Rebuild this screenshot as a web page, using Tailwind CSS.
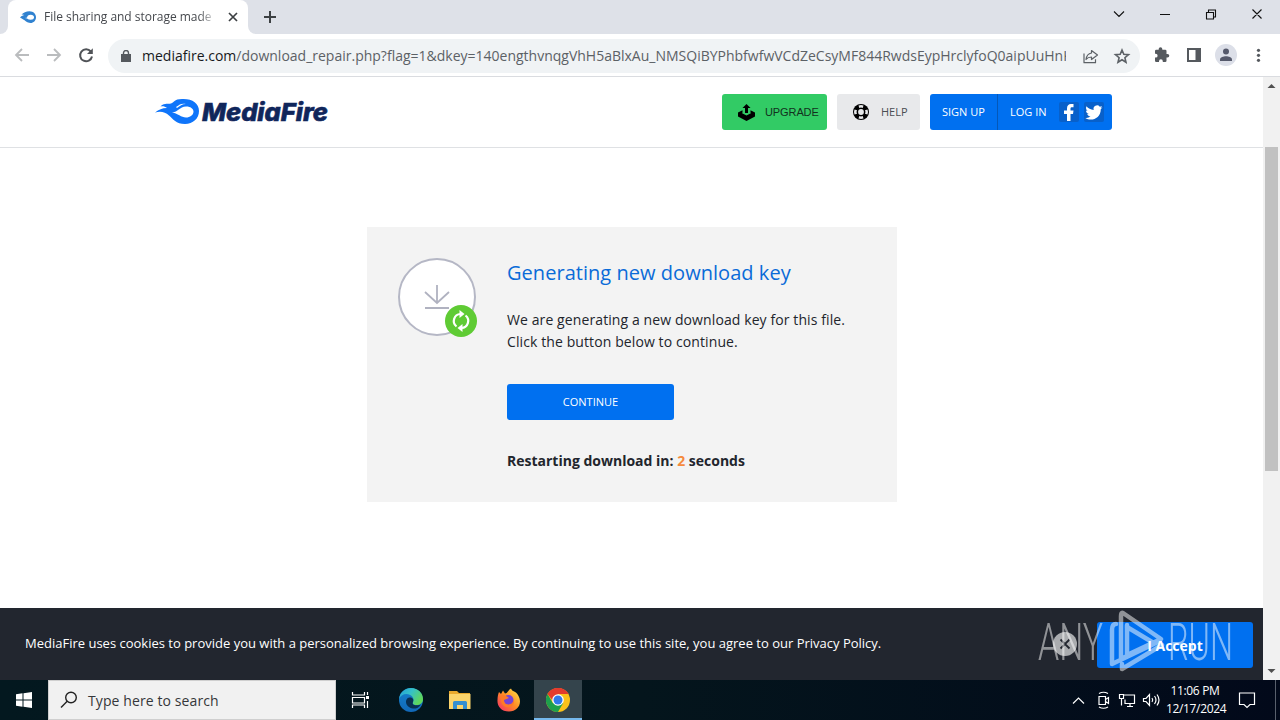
<!DOCTYPE html>
<html lang="en">
<head>
<meta charset="utf-8">
<title>File sharing and storage made simple</title>
<script src="https://cdn.jsdelivr.net/npm/@tailwindcss/browser@4"></script>
</head>
<body class="w-[1280px] h-[720px] overflow-hidden bg-white font-['Open_Sans',sans-serif] flex flex-col">

<!-- Tab strip -->
<div class="h-[34px] shrink-0 bg-[#dee1e8] flex items-end">
  <div class="w-2 h-[34px] bg-white"><div class="w-2 h-[34px] bg-[#dee1e8] rounded-br-lg"></div></div>
  <div class="w-[240px] h-[34px] bg-white rounded-t-lg flex items-center pl-3">
    <svg class="w-4 h-4 shrink-0" viewBox="0 0 16 16"><path d="M0 8.500C2 6.500 3 6.500 4.500 6C3.500 5.500 2.500 5.300 1.500 5.500C3.500 3.500 6 2.200 9.500 2.200C13.500 2.200 16 5 16 8.200C16 11.500 13.500 14 10.500 14C7 14 5 11 0 8.500Z" fill="#3082d0"/><ellipse cx="10.600" cy="8.200" rx="3.400" ry="2.500" fill="#fff"/><path d="M5 9C7 8.800 8 8.500 9 7.500L9 10Z" fill="#fff"/></svg>
    <span class="ml-2 w-[171px] overflow-hidden whitespace-nowrap text-[12px] tracking-[-0.03px] text-[#45484d] [mask-image:linear-gradient(to_right,#000_155px,transparent_173px)]">File sharing and storage made simple</span>
    <svg class="ml-3 w-3 h-3 shrink-0" viewBox="0 0 12 12"><path d="M2 2l8 8M10 2l-8 8" stroke="#3c4043" stroke-width="1.700"/></svg>
  </div>
  <div class="w-2 h-[34px] bg-white"><div class="w-2 h-[34px] bg-[#dee1e8] rounded-bl-lg"></div></div>
  <svg class="ml-2 mb-[11px] w-3 h-3" viewBox="0 0 12 12"><path d="M6 0v12M0 6h12" stroke="#3c4043" stroke-width="2"/></svg>
  <svg class="ml-auto mb-0 w-[180px] h-[34px] shrink-0" viewBox="1100 0 180 34" fill="none" stroke="#111" stroke-width="1.100"><path d="M1114 11.500l5 5 5-5M1160 14.500h10M1206.500 12.500h7v6.500h-7zM1208.500 12.500v-2.500h7v7h-2M1252.500 9.500l9 9M1261.500 9.500l-9 9"/></svg>
</div>

<!-- Toolbar -->
<div class="h-[43px] shrink-0 bg-white border-b border-[#dadce0] flex items-center">
  <svg class="w-[108px] h-[42px] shrink-0" viewBox="0 34 108 42" fill="none" stroke-width="1.800"><path d="M29 55H16M22 49l-6 6 6 6M47 55H60M54 49l6 6-6 6" stroke="#babcbe"/><path d="M90.800 51.500A6 6 0 1 0 92 56.500" stroke="#505357" stroke-width="2"/><path d="M92.800 48.300v5.800h-5.800z" fill="#505357"/></svg>
  <div class="w-[1032px] h-[34px] mt-px rounded-full bg-[#f0f3f5] flex items-center pl-[13px]">
    <svg class="w-[10px] h-[12px] shrink-0" viewBox="0 0 10 12"><path d="M0 4h10v8H0z" fill="#55595e"/><path d="M2.500 4.500V3a2.500 2.500 0 0 1 5 0v1.500" stroke="#55595e" stroke-width="1.400" fill="none"/></svg>
    <span class="ml-[11px] w-[924px] overflow-hidden whitespace-nowrap text-[14px] text-[#5c6166]"><span class="text-[#17191c]">mediafire.com</span>/download_repair.php?flag=1&amp;dkey=140engthvnqgVhH5aBlxAu_NMSQiBYPhbfwfwVCdZeCsyMF844RwdsEypHrclyfoQ0aipUuHnKsEhZ...</span>
    <svg class="ml-auto w-[60px] h-[34px] shrink-0" viewBox="1080 38 60 34" fill="none" stroke="#5c6166" stroke-width="1.200"><path d="M1084 52.500v9.200h11.500v-3.500M1091.500 49.500l6 4.500-6 4.500v-2.500c-3 0-4 .5-5.500 2.500.5-4 2.500-6 5.500-6.500z" stroke-linejoin="round"/><path d="M1122 49l1.800 4.300 4.700.4-3.600 3 1.100 4.600-4-2.500-4 2.500 1.100-4.600-3.600-3 4.700-.4z" stroke-width="1.600"/></svg>
  </div>
  <svg class="w-[140px] h-[42px] shrink-0" viewBox="1140 34 140 42"><path d="M1167.500 54h-1V51a1.300 1.300 0 0 0-1.300-1.300h-2.900V49a1.800 1.800 0 0 0-3.600 0v.7h-2.400A1.300 1.300 0 0 0 1155 51v2.800h.7a1.900 1.900 0 0 1 0 3.800h-.7v3.100a1.300 1.300 0 0 0 1.300 1.300h2.700v-.8a1.900 1.900 0 0 1 3.800 0v.8h2.400a1.300 1.300 0 0 0 1.300-1.300V57.600h1a1.800 1.800 0 0 0 0-3.600z" fill="#55595e"/><path d="M1187 48h14v14h-14zM1189 50v10h6.500v-10z" fill="#55595e" fill-rule="evenodd"/><circle cx="1226" cy="55" r="11" fill="#dcdfe8"/><circle cx="1226" cy="51.500" r="3" fill="#55596b"/><path d="M1220 61v-1.500c0-2.200 3.500-3.300 6-3.300s6 1.100 6 3.300V61z" fill="#55596b"/><circle cx="1258.500" cy="50.300" r="1.600" fill="#55595e"/><circle cx="1258.500" cy="55.300" r="1.600" fill="#55595e"/><circle cx="1258.500" cy="60.300" r="1.600" fill="#55595e"/></svg>
</div>

<!-- Page -->
<div class="relative h-[603px] shrink-0 flex">
  <div class="w-[1263px] flex flex-col">
    <header class="h-[71px] shrink-0 border-b border-[#dfe1e4] flex items-center pl-[155px] pr-[151px]">
      <svg class="w-[176px] h-[30px]" viewBox="155 97 176 30"><path d="M155 112.500C159 109.500 162 108 167 108C165 106.500 163 106 160.500 106.500C163 103 167 104 171 103.500C174 102.500 174 99 182 99C192 98.500 199 103 199 111C199 118.500 193 124 185 124C176 124 173 119 169 115.500C165 112 161 111 155 112.500Z" fill="#0f75fa"/><path d="M171 112C177 113.500 179 107 186 106.500C190 106.300 193.500 108.500 193.500 111.500C193.500 115 190 117.500 186 117.500C181 117.500 178.500 113.500 171 112Z" fill="#fff"/><path d="M176 107c4-3 6-4 10-3-4 0-6 2-9 4z" fill="#fff"/><text x="202" y="121" font-family="Inter" font-size="24.500" font-weight="800" font-style="italic" fill="#10265b" stroke="#10265b" stroke-width=".6" textLength="126" lengthAdjust="spacingAndGlyphs">MediaFire</text></svg>
      <div class="ml-auto flex text-[11px]">
        <div class="w-[105px] h-9 rounded-[3px] bg-[#32cb65] text-[#12301d] flex items-center pl-4">
          <svg class="w-[17px] h-[17px] mr-[10px]" viewBox="0 0 17 17"><path d="M0 8.500L4.500 6.200V8.700L3.700 9 8.500 11.500 13.300 9l-.8-.3V6.200L17 8.500v4L8.500 17 0 12.500z" fill="#000"/><path d="M8.500 0l4 4H10v5H7V4H4.500z" fill="#000"/></svg>
          <span class="tracking-[-0.1px] font-['Liberation_Sans']">UPGRADE</span>
        </div>
        <div class="ml-[10px] w-[83px] h-9 rounded-[3px] bg-[#e8e9eb] text-[#4a4d52] flex items-center pl-4">
          <svg class="w-4 h-4 mr-3" viewBox="0 0 16 16"><circle cx="8" cy="8" r="8"/><g fill="#e8e9eb"><circle cx="8" cy="8" r="2.900"/><path d="M5.500 1.500L6.300 4 8 3.500 9.700 4l.8-2.500L8 1zM5.500 14.500L6.300 12l1.700.5 1.700-.5.8 2.500L8 15zM1.500 5.500L4 6.300 3.500 8 4 9.700l-2.500.8L1 8zM14.500 5.500L12 6.300l.5 1.700-.5 1.700 2.500.8L15 8z"/></g></svg>
          <span>HELP</span>
        </div>
        <div class="ml-[10px] w-[182px] h-9 rounded-[3px] bg-[#0070f0] text-white flex items-center">
          <span class="w-[68px] h-9 border-r border-[#0558b8] flex items-center pl-3">SIGN UP</span>
          <span class="w-[49px] pl-3 whitespace-nowrap">LOG IN</span>
          <svg class="ml-3 w-[20px] h-5" viewBox="0 0 20 20"><rect width="20" height="20" rx="2" fill="#0860ca"/><path d="M8 19v-7H5V8.500h3V6.500C8 3.500 9.500 2 12 2h2.500v3.300H13c-1 0-1.500.4-1.500 1.400v1.800h3L14 12h-2.500v7z" fill="#fff"/></svg>
          <svg class="ml-[5px] w-5 h-5" viewBox="0 0 20 20"><rect width="20" height="20" rx="2" fill="#0860ca"/><path d="M18.500 5.200c-.7.300-1.300.5-2 .6.700-.5 1.200-1.100 1.500-1.900-.7.400-1.400.7-2.200.9A3.500 3.500 0 0 0 9.700 8c-3-.2-5.500-1.500-7.200-3.700-.9 1.600-.5 3.600 1.100 4.700-.6 0-1.100-.2-1.600-.4 0 1.700 1.200 3.100 2.800 3.500-.5.100-1 .1-1.600 0 .5 1.400 1.800 2.400 3.300 2.500A7 7 0 0 1 1.400 16c5.800 3.700 15.400.8 15.400-9 .7-.5 1.200-1.100 1.700-1.800z" fill="#fff"/></svg>
        </div>
      </div>
    </header>

    <main class="flex-1 pt-[79px] pl-[367px]">
      <section class="w-[530px] h-[275px] bg-[#f3f3f3] flex pl-[30px] pt-[30px]">
        <svg class="w-[82px] h-[82px] shrink-0" viewBox="397 257 82 82" fill="none"><circle cx="437" cy="297" r="38" fill="#fff" stroke="#b5b7c5" stroke-width="2"/><path d="M437 285v18M425 292l12 11 12-11M425 308h24" stroke="#b0b2c0" stroke-width="1.800"/><circle cx="461" cy="321" r="16" fill="#5fcb34"/><g stroke="#fff" stroke-width="2.200"><path d="M456.500 326.500A7 7 0 0 1 460.500 314M465.500 315.500A7 7 0 0 1 461.500 328"/></g><path d="M459.500 310l5 4-5 4zM462.500 324l-5 4 5 4z" fill="#fff"/></svg>
        <div class="ml-7 text-[#22252c] whitespace-nowrap">
          <h1 class="text-[20px] leading-[30px] text-[#0a6bd8] tracking-[0.04px] mt-[1px]">Generating new download key</h1>
          <p class="mt-[21px] text-[14px] leading-[22px] tracking-[0.1px]">We are generating a new download key for this file.<br>Click the button below to continue.</p>
          <div class="mt-[31px] w-[167px] h-9 rounded-[3px] bg-[#0070f0] text-white text-[11px] flex items-center justify-center">CONTINUE</div>
          <p class="mt-[31px] text-[14px] leading-5 font-bold">Restarting download in: <span class="text-[#f58a3c]">2</span> seconds</p>
        </div>
      </section>
    </main>

    <footer class="h-[72px] shrink-0 bg-[#22262f] text-white flex items-center pl-[25px] pr-[10px]">
      <span class="text-[13px] whitespace-nowrap">MediaFire uses cookies to provide you with a personalized browsing experience. By continuing to use this site, you agree to our Privacy Policy.</span>
      <svg class="ml-auto w-6 h-6" viewBox="0 0 24 24"><circle cx="12" cy="12" r="12" fill="#aaacaf"/><path d="M7.500 7.500l9 9M16.500 7.500l-9 9" stroke="#22262f" stroke-width="1.800"/></svg>
      <div class="ml-5 mt-0.5 w-[156px] h-[46px] rounded-[3px] bg-[#0070f0] font-bold text-[14px] flex items-center justify-center">I Accept</div>
    </footer>
  </div>
  <div class="w-[17px] bg-[#f1f1f1] flex flex-col items-center">
    <svg class="w-[17px] h-[17px]" viewBox="0 0 17 17"><path d="M4.500 11h8l-4-4z" fill="#505050"/></svg>
    <div class="mt-[53px] w-[13px] h-[324px] bg-[#c1c1c1]"></div>
    <svg class="mt-auto w-[17px] h-[17px]" viewBox="0 0 17 17"><path d="M4.500 6h8l-4 4z" fill="#505050"/></svg>
  </div>
  <!-- Watermark over the footer -->
  <svg class="absolute left-[1030px] top-[528px] w-[210px] h-[70px]" viewBox="1030 605 210 70" fill="none" opacity=".5"><g fill="#fff" font-family="Roboto" font-size="52" font-weight="300"><text x="1038" y="659.500" textLength="65" lengthAdjust="spacingAndGlyphs">ANY</text><text x="1168" y="659.500" textLength="65" lengthAdjust="spacingAndGlyphs">RUN</text></g><g stroke="#fff" stroke-width="4.500" stroke-linejoin="round" stroke-linecap="round"><path d="M1127 625V655L1161 639 1123 613Q1121 612 1121 616V659L1127 656M1127 627L1152 642M1116 624Q1112 624 1112 630V664L1158 642M1122 664V669L1162 645"/></g></svg>
</div>

<!-- Taskbar -->
<div class="h-10 shrink-0 bg-linear-to-r from-[#03181f] via-[#04151c] to-[#02091a] flex font-['Open_Sans'] text-white">
  <div class="w-12 flex items-center justify-center"><svg class="w-4 h-4" viewBox="0 0 16 16" fill="#fff"><path d="M0 2.200L6.500 1.300V7.500H0zM7.500 1.200L16 0v7.500H7.500zM0 8.500h6.500v6.200L0 13.800zM7.500 8.500H16V16l-8.500-1.200z"/></svg></div>
  <div class="w-[288px] h-10 bg-[#f1f1f1] border border-[#cfcfcf] flex items-center pl-[11px] text-[#35373a]">
    <svg class="w-[18px] h-[18px]" viewBox="0 0 18 18" fill="none" stroke="#222" stroke-width="1.400"><circle cx="11" cy="6.500" r="5.300"/><path d="M7.200 10.300L1 16.500"/></svg>
    <span class="ml-[10px] text-[14px] tracking-[0.1px]">Type here to search</span>
  </div>
  <svg class="w-12 h-10" viewBox="336 680 48 40" fill="none" stroke="#fff" stroke-width="1.200"><path d="M352.500 692v3h12v-3M352.500 708v-3h12v3M352.500 697.500h12v5.500h-12zM367.500 692v3M367.500 701v7"/><path d="M366 696h3v3h-3z" fill="#fff" stroke="none"/></svg>
  <svg class="w-[54px] h-10" viewBox="384 680 54 40"><defs><linearGradient id="eg" x1="0" y1="0" x2="1" y2="0.500"><stop offset="0" stop-color="#229ed9"/><stop offset=".5" stop-color="#35c1c8"/><stop offset="1" stop-color="#5fd75a"/></linearGradient><linearGradient id="eb" x1="0" y1="0" x2="0" y2="1"><stop offset="0" stop-color="#1581cc"/><stop offset="1" stop-color="#1168b8"/></linearGradient></defs><circle cx="411" cy="700" r="12" fill="url(#eb)"/><path d="M399 699C400 692 405 688 411 688C418 688 423 693 423 699C423 703 420 705 416.500 705C413 705 412 703.500 413 702C415 698 411 694 406.500 694C403 694 400 696 399 699Z" fill="url(#eg)"/><path d="M406 702C406 698 409 697 411 697.500C414 698.500 413.500 701 413 702C412 704 413.500 705.300 416.500 705.300C418.500 705.300 420 704.800 421 704.200C419 708 415 709 413 708.500C409 708 406 705 406 702Z" fill="#082f52"/></svg>
  <svg class="w-[44px] h-10" viewBox="438 680 44 40"><path d="M449 691h8l2 2h11v16h-21z" fill="#e9a92d"/><path d="M449 694h21.500v15H449z" fill="#fbd46b"/><path d="M453 709v-6.500q0-1.500 1.500-1.500h11q1.500 0 1.500 1.500V709h-4v-4h-6v4z" fill="#358fd0"/></svg>
  <svg class="w-[52px] h-10" viewBox="482 680 52 40"><defs><linearGradient id="ff" x1="1" y1="0" x2="0" y2="1"><stop offset="0" stop-color="#ffe94a"/><stop offset=".5" stop-color="#ff8a25"/><stop offset="1" stop-color="#f5286e"/></linearGradient></defs><path d="M499 692L501 694L503 690.500L505 693.500C508 693 508 690 511 688.500C512 692 516 691 518 695C523 703 518 711.500 509 711.500C501 711.500 497 706 497.500 700C497.500 697 498 694 499 692Z" fill="url(#ff)"/><circle cx="508.500" cy="700" r="5" fill="#7543d6"/><path d="M500 696C504 694 507 696 509 698L504 700C504 706 512 706 514 700C515 708 505 710 501.500 703Z" fill="#ff7a27"/></svg>
  <div class="w-12 h-10 bg-[#34444c] border-b-2 border-[#76b9ed] flex items-center justify-center"><svg class="w-6 h-6 mt-0.5" viewBox="0 0 24 24"><circle cx="12" cy="12" r="12" fill="#fbc11a"/><path d="M12 12L1.600 6A12 12 0 0 1 22.400 6L12 6z" fill="#e33b2e"/><path d="M1.600 6A12 12 0 0 0 12 24L17.200 15 12 12 6.800 15z" fill="#1ea04c"/><path d="M1.600 6A12 12 0 0 1 22.400 6H12L7 13z" fill="#e33b2e"/><circle cx="12" cy="12" r="5.800" fill="#fff"/><circle cx="12" cy="12" r="4.500" fill="#3079ea"/></svg></div>
  <svg class="ml-auto w-[104px] h-10" viewBox="1062 680 104 40" fill="none" stroke="#fff" stroke-width="1.200"><path d="M1073 703.500l5.500-5.500 5.500 5.500M1099 696.500h6.500v8H1099zM1105.500 699.500l3-2v6l-3-2M1099 693.500q4.500-2.500 9 0M1099 707q4.500 2.500 9 0M1123.500 695h11v8.500h-9.500v-4M1119.500 694.500h4v4h-4zM1121.500 698.500v7M1127 706.500h6M1130 703.500v3M1143.500 698.500h2.500l3.500-4v11l-3.500-4h-2.500zM1152 698q1.500 2 0 4M1154.500 696q3 4 0 8M1157 694.500q4 5.500 0 11"/></svg>
  <div class="w-[58px] text-[12px] leading-[18px] pt-[2px] text-center whitespace-nowrap tracking-[-0.35px]">11:06 PM<br>12/17/2024</div>
  <svg class="w-[56px] h-10" viewBox="1224 680 56 40" fill="none"><path d="M1239.500 693h15v11.500h-4.500l-3 3-3-3h-4.500z" stroke="#fff" stroke-width="1.200"/><path d="M1275.500 680v40" stroke="#59606c"/></svg>
</div>
</body>
</html>
